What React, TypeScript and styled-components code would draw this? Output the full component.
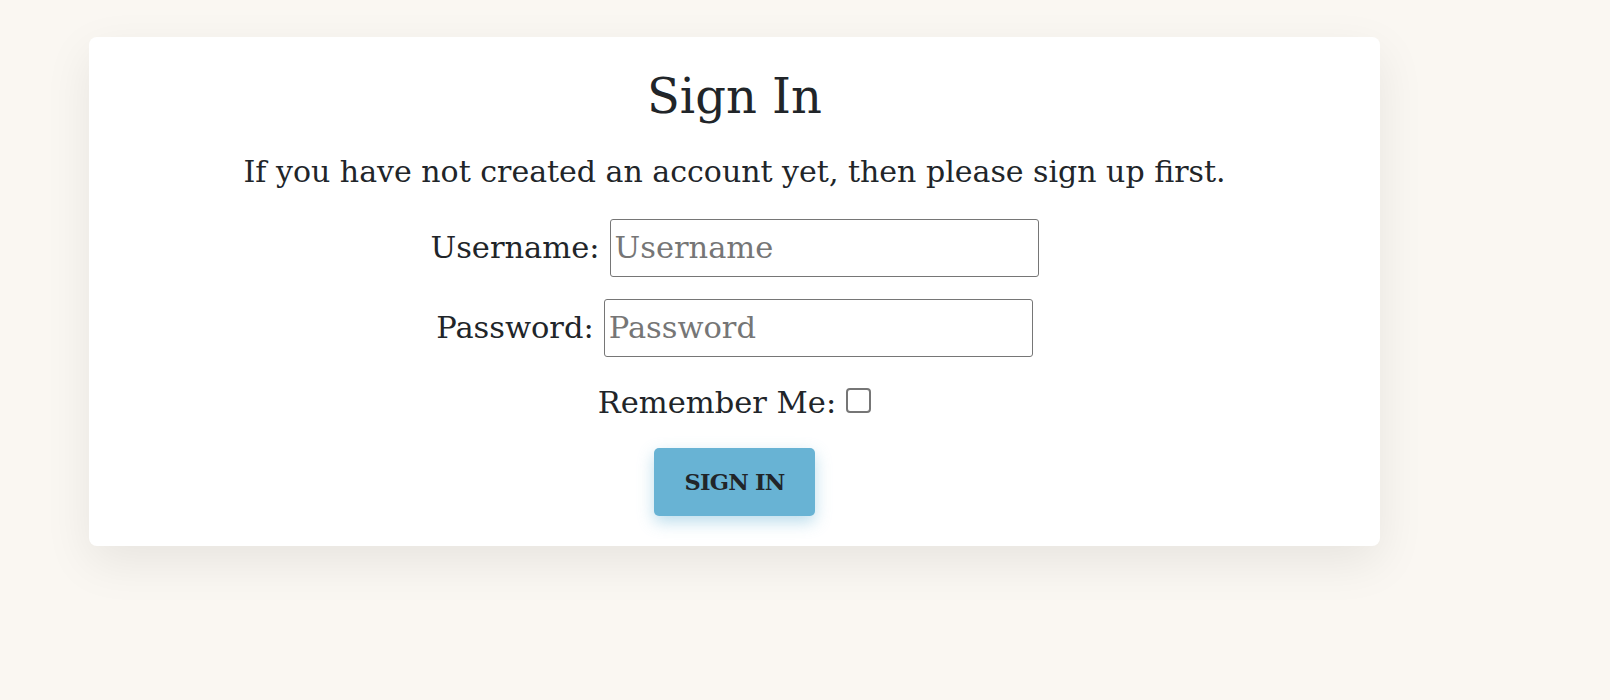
import React from "react";
import styled, { createGlobalStyle } from "styled-components";

const GlobalStyle = createGlobalStyle`
  html, body {
    margin: 0;
    padding: 0;
    background: #faf7f2;
  }
  body {
    font-family: "DejaVu Serif", "Liberation Serif", serif;
    color: #212529;
  }
  * { box-sizing: border-box; }
`;

const Page = styled.div`
  min-height: 700px;
  padding: 37px 0 0 89px;
`;

const Card = styled.form`
  width: 1291px;
  height: 509px;
  background: #ffffff;
  border-radius: 8px;
  box-shadow: 0 16px 48px rgba(0, 0, 0, 0.08);
  display: flex;
  flex-direction: column;
  align-items: center;
  padding-top: 31px;
`;

const Title = styled.h1`
  margin: 0;
  font-size: 48px;
  line-height: 57.6px;
  font-weight: 400;
`;

const Lead = styled.p`
  margin: 25px 0 0;
  font-size: 30px;
  line-height: 42px;
`;

const Row = styled.div<{ $mt: number }>`
  display: flex;
  align-items: baseline;
  justify-content: center;
  gap: 10px;
  margin-top: ${(p) => p.$mt}px;
  font-size: 30.5px;
`;

const Label = styled.label`
  font-size: 30.5px;
`;

const Input = styled.input`
  width: 429px;
  height: 58px;
  padding: 1px 4px;
  font-family: inherit;
  font-size: 30.5px;
  color: #212529;
  border: 1.5px solid #767676;
  border-radius: 3px;
  background: #fff;
  outline: none;
  &::placeholder {
    color: #767676;
  }
`;

const Check = styled.input`
  appearance: none;
  -webkit-appearance: none;
  width: 25px;
  height: 25px;
  margin: 0;
  border: 2px solid #767676;
  border-radius: 4px;
  background: #fff;
  align-self: center;
  transform: translateY(-2px);
`;

const Button = styled.button`
  margin-top: 28px;
  width: 161px;
  height: 68px;
  border: none;
  border-radius: 5px;
  background: #68b3d4;
  color: #212529;
  font-family: inherit;
  font-weight: 700;
  font-size: 22.5px;
  letter-spacing: -0.8px;
  box-shadow: 0 6px 16px rgba(104, 179, 212, 0.45);
  cursor: pointer;
`;

export default function App() {
  return (
    <>
      <GlobalStyle />
      <Page>
        <Card onSubmit={(e) => e.preventDefault()}>
          <Title>Sign In</Title>
          <Lead>If you have not created an account yet, then please sign up first.</Lead>
          <Row $mt={26}>
            <Label htmlFor="id_login">Username:</Label>
            <Input id="id_login" type="text" placeholder="Username" />
          </Row>
          <Row $mt={22}>
            <Label htmlFor="id_password">Password:</Label>
            <Input id="id_password" type="password" placeholder="Password" />
          </Row>
          <Row $mt={28}>
            <Label htmlFor="id_remember">Remember Me:</Label>
            <Check id="id_remember" type="checkbox" />
          </Row>
          <Button type="submit">SIGN IN</Button>
        </Card>
      </Page>
    </>
  );
}
